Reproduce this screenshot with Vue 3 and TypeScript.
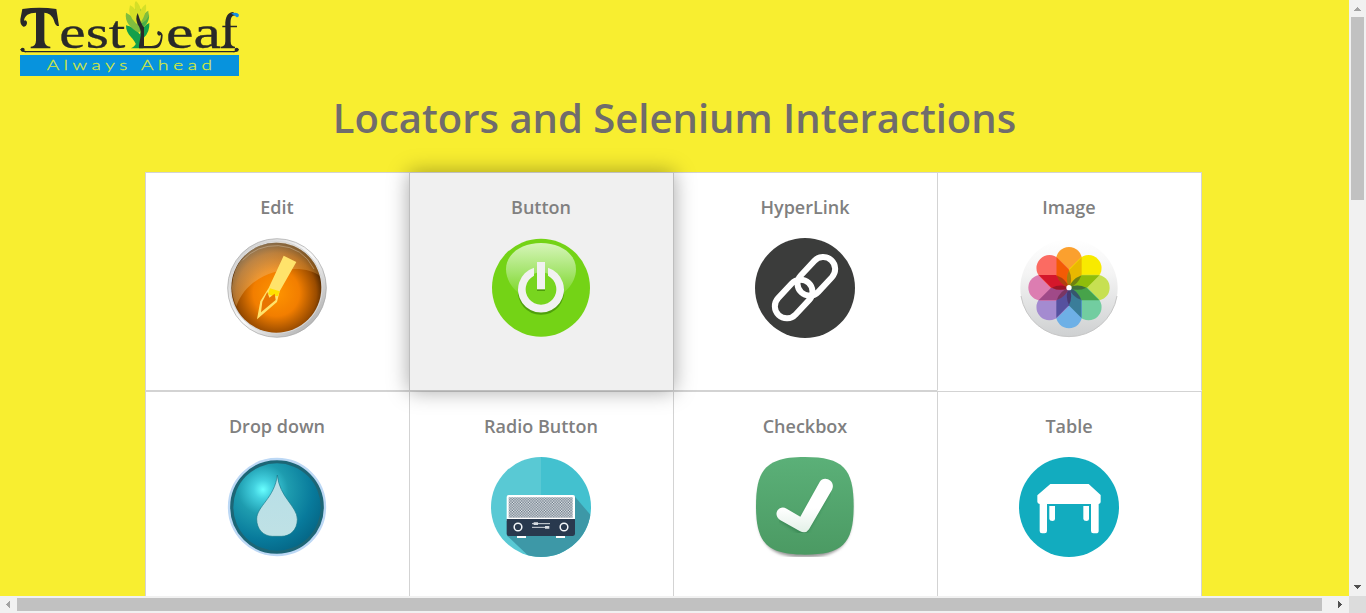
<script setup lang="ts">
interface Topic {
  name: string
  icon: string
  active?: boolean
}

const topics: Topic[] = [
  { name: 'Edit', icon: 'edit' },
  { name: 'Button', icon: 'power', active: true },
  { name: 'HyperLink', icon: 'link' },
  { name: 'Image', icon: 'flower' },
  { name: 'Drop down', icon: 'drop' },
  { name: 'Radio Button', icon: 'radio' },
  { name: 'Checkbox', icon: 'check' },
  { name: 'Table', icon: 'table' },
]

const petals: { color: string; angle: number }[] = [
  { color: '#fba02e', angle: 0 },
  { color: '#f8ea00', angle: 45 },
  { color: '#c7e052', angle: 90 },
  { color: '#72cda0', angle: 135 },
  { color: '#6eb0e6', angle: 180 },
  { color: '#a48bd0', angle: 225 },
  { color: '#dc7db1', angle: 270 },
  { color: '#fb6b62', angle: 315 },
]

const wedges: { color: string; angle: number }[] = [
  { color: '#e9b800', angle: 0 },
  { color: '#8fbd0b', angle: 45 },
  { color: '#47a34a', angle: 90 },
  { color: '#3a7d99', angle: 135 },
  { color: '#56519f', angle: 180 },
  { color: '#a04a88', angle: 225 },
  { color: '#d4172b', angle: 270 },
  { color: '#f35b05', angle: 315 },
]
</script>

<template>
  <div class="window">
    <main class="page">
      <header class="brand">
        <svg class="logo" viewBox="30 0 660 230" role="img" aria-label="TestLeaf">
          <rect x="30" y="165" width="657" height="63" fill="#0793dd" />
          <g fill="#292929" stroke="none">
            <path d="M37 27 Q88 19 139 27 L147 78 Q139 80 134 68 C128 44 114 39 103 38 V121 Q104 140 121 140 V145 H62 V140 Q78 140 78 121 V38 C57 38 43 46 42 63 C44 59 51 61 51 69 Q50 80 40 80 Q30 76 31 58 Z" />
            <g class="letters" stroke="#292929" stroke-width="1">
              <text x="148" y="143" textLength="198" lengthAdjust="spacingAndGlyphs">est</text>
              <text x="468" y="143" textLength="165" lengthAdjust="spacingAndGlyphs">ea</text>
            </g>
            <path d="M637 77 H646 C645 50 654 37 670 36 L676 47 C662 44 661 61 662 77 H681 V82 H662 V124 Q662 140 675 140 V145 H633 V140 Q646 140 646 124 V82 H637Z" />
          </g>
          <path d="M665 40 Q682 35 687 44 Q686 54 679 51 Q673 44 665 42Z" fill="#128fe3" />
          <path d="M382 145 C376 113 347 108 348 76 Q375 81 389 103 Q400 76 418 69 Q420 97 400 115 V145 H363 Q380 138 382 115Z" fill="#13a04b" />
          <path d="M386 98 C362 84 343 66 348 38 Q364 45 373 58 Q374 25 380 10 Q397 28 396 53 Q404 36 415 32 Q421 63 395 89Z" fill="#80bd3e" />
          <path d="M379 71 Q350 44 360 16 Q370 20 376 29 Q371 9 378 3 Q392 15 391 34 Q397 19 408 13 Q412 38 391 69Z" fill="#d5df27" />
          <path d="M385 72 Q416 66 417 38 Q420 65 404 77 Q393 85 393 104Z" fill="#4bae45" />
          <path d="M383 39 Q375 56 383 73 Q398 91 390 119 Q386 137 387 145 H435 C449 145 457 131 458 105 Q455 94 444 93 Q438 102 447 107 L453 105 C452 127 443 138 424 138 H402 V82 Q395 77 383 39Z" fill="#292929" />
          <g fill="none" stroke="#292929" stroke-width="4">
            <path d="M44 155 H674" />
            <path d="M32 147 Q36 155 48 155 M685 147 Q681 155 670 155" />
          </g>
          <g fill="#292929"><circle cx="38" cy="149" r="6" /><circle cx="680" cy="149" r="6" /></g>
          <text class="tagline" x="110" y="209" textLength="510" lengthAdjust="spacingAndGlyphs">Always Ahead</text>
        </svg>
      </header>

      <h1>Locators and Selenium Interactions</h1>

      <ul class="topics">
        <li v-for="topic in topics" :key="topic.name" :class="{ active: topic.active }">
          <h2>{{ topic.name }}</h2>

          <svg v-if="topic.icon === 'edit'" class="icon" viewBox="30 30 300 300">
            <defs>
              <linearGradient id="rim" x1="0" y1="0" x2="1" y2="1">
                <stop offset="0" stop-color="#c4c4c4" /><stop offset=".5" stop-color="#fafafa" /><stop offset="1" stop-color="#9c9c9c" />
              </linearGradient>
              <radialGradient id="amber" cx=".5" cy=".56" r=".57">
                <stop offset="0" stop-color="#ff9400" /><stop offset=".45" stop-color="#f27e00" /><stop offset=".78" stop-color="#9a4c00" /><stop offset="1" stop-color="#201000" />
              </radialGradient>
              <linearGradient id="sheen" x1="0" y1="0" x2=".8" y2=".8">
                <stop offset="0" stop-color="#d4c5ad" stop-opacity=".6" /><stop offset="1" stop-color="#ffb347" stop-opacity=".25" />
              </linearGradient>
            </defs>
            <circle cx="180" cy="180" r="148" fill="url(#rim)" stroke="#a5a5a5" stroke-width="2" />
            <circle cx="178" cy="178" r="138" fill="#e2e2e2" stroke="#d6d6d6" stroke-width="3" />
            <circle cx="178" cy="179" r="135" fill="url(#amber)" />
            <path d="M58 235 A134 134 0 1 1 309 145 C265 103 98 116 58 235Z" fill="url(#sheen)" />
            <path d="M77 97 Q119 51 184 53 Q257 57 291 123" fill="none" stroke="#ded0b9" stroke-opacity=".4" stroke-width="3" />
            <path d="M200 83 L238 102 L188 190 L180 222 L120 274 L130 220 L155 180Z" fill="#ffe36b" />
            <path d="M159 181 L188 190 L183 204 L169 205 L153 198Z" fill="#ffe100" />
            <path d="M151 192 L157 209 L173 197 L176 216 L132 253 L136 221Z" fill="#e87500" />
          </svg>

          <svg v-else-if="topic.icon === 'power'" class="icon" viewBox="30 30 300 300">
            <defs>
              <linearGradient id="gloss" x1="0" y1="0" x2="0" y2="1">
                <stop offset="0" stop-color="#d6f5b9" /><stop offset=".5" stop-color="#a6e56f" /><stop offset="1" stop-color="#75d419" />
              </linearGradient>
            </defs>
            <circle cx="180" cy="179" r="147" fill="#74d316" />
            <path d="M75 124 C75 78 120 45 180 45 S285 78 285 124 C285 165 249 215 180 215 S75 165 75 124Z" fill="url(#gloss)" />
            <g transform="translate(0 11)" fill="none" stroke="#4f9f0b" stroke-width="22"><path d="M148 132 A58 58 0 1 0 212 132" /></g>
            <circle cx="180" cy="182" r="49" fill="#78d51f" />
            <path d="M168 110 h24 v79 h-24z" fill="#4f9f0b" />
            <path d="M159 119 V143 A46 46 0 1 0 201 143 V119 A69 69 0 1 1 159 119Z" fill="#f1f1f1" />
            <path d="M168 102 h24 v82 h-24z" fill="#f1f1f1" />
          </svg>

          <svg v-else-if="topic.icon === 'link'" class="icon" viewBox="30 30 300 300">
            <circle cx="180" cy="180" r="150" fill="#3b3c3b" />
            <g fill="none" stroke="#fff" stroke-width="18">
              <rect x="-66" y="-36" width="132" height="72" rx="36" transform="translate(214 145) rotate(-47)" />
              <rect x="-66" y="-36" width="132" height="72" rx="36" transform="translate(146 213) rotate(-47)" />
            </g>
          </svg>

          <svg v-else-if="topic.icon === 'flower'" class="icon" viewBox="30 30 300 300">
            <defs>
              <linearGradient id="dish" x1="0" y1="0" x2="0" y2="1">
                <stop offset="0" stop-color="#fff" /><stop offset=".35" stop-color="#f4f4f4" /><stop offset="1" stop-color="#ced0d1" />
              </linearGradient>
            </defs>
            <circle cx="180" cy="180" r="146" fill="url(#dish)" />
            <path d="M36 204 A146 146 0 0 0 324 204" fill="none" stroke="#c7c7c7" stroke-width="3" />
            <g v-for="petal in petals" :key="petal.angle" :transform="`rotate(${petal.angle} 180 179)`">
              <path d="M180 179 L141 141 V96 A39 39 0 0 1 219 96 V141Z" :fill="petal.color" />
            </g>
            <g v-for="wedge in wedges" :key="wedge.angle" :transform="`rotate(${wedge.angle} 180 179)`">
              <path d="M180 179 V126 L218 88 V141Z" :fill="wedge.color" />
            </g>
            <g v-for="wedge in wedges" :key="`core-${wedge.angle}`" :transform="`rotate(${wedge.angle} 180 179)`">
              <path d="M180 179 Q167 155 180 127 Q193 155 180 179Z" :fill="wedge.color" />
              <path d="M180 179 Q167 155 180 127 Q193 155 180 179Z" fill="#301020" fill-opacity=".35" />
            </g>
            <circle cx="180" cy="179" r="8" fill="#fff" />
          </svg>

          <svg v-else-if="topic.icon === 'drop'" class="icon" viewBox="30 30 300 300">
            <defs>
              <radialGradient id="water" cx=".34" cy=".3" r=".76">
                <stop offset="0" stop-color="#69ffff" /><stop offset=".14" stop-color="#43d1df" /><stop offset=".38" stop-color="#1e9caf" /><stop offset=".75" stop-color="#087a9b" /><stop offset="1" stop-color="#056787" />
              </radialGradient>
              <linearGradient id="bead" x1="0" y1="0" x2="0" y2="1">
                <stop offset="0" stop-color="#b7dfe7" /><stop offset="1" stop-color="#bfe1e5" />
              </linearGradient>
            </defs>
            <circle cx="180" cy="180" r="144" fill="#1d6676" stroke="#bcd8f5" stroke-width="7" />
            <circle cx="180" cy="180" r="131" fill="url(#water)" />
            <path d="M181 84 C187 151 241 178 241 217 C241 249 219 268 193 268 H166 C139 267 119 247 119 216 C119 178 173 153 181 84Z" fill="url(#bead)" stroke="#17788b" stroke-width="2" />
          </svg>

          <svg v-else-if="topic.icon === 'radio'" class="icon" viewBox="30 30 300 300">
            <defs>
              <clipPath id="disc"><circle cx="180" cy="180" r="150" /></clipPath>
              <pattern id="mesh" width="8" height="8" patternUnits="userSpaceOnUse">
                <rect width="8" height="8" fill="#e7ebee" /><path d="M0 0h4v4h-4zM4 4h4v4h-4z" fill="#657482" />
              </pattern>
            </defs>
            <g clip-path="url(#disc)">
              <path d="M30 30h150v300h-150z" fill="#59c9d4" /><path d="M180 30h150v300h-150z" fill="#43c1cf" />
              <path d="M280 147 L350 229 V350 H167 L78 266Z" fill="#3d98a7" />
            </g>
            <rect x="77" y="144" width="205" height="82" rx="6" fill="#fff" />
            <path d="M83 151h192v61h-192z" fill="url(#mesh)" />
            <path d="M77 216 H282 V261 Q281 267 275 267 H83 Q77 267 77 261Z" fill="#29394e" />
            <g fill="none" stroke="#f4f7fa" stroke-width="4.5"><circle cx="111" cy="240" r="11.5" /><circle cx="249" cy="240" r="11.5" /></g>
            <path d="M153 230h54M153 241h50" stroke="#d7dce1" stroke-width="3" />
            <path d="M158 226h13v8h-13zM192 237h13v8h-13z" fill="#d7dce1" />
            <path d="M108 267h27v6h-27zM225 267h27v6h-27z" fill="#fff" />
          </svg>

          <svg v-else-if="topic.icon === 'check'" class="icon" viewBox="30 30 300 300">
            <defs>
              <linearGradient id="leafy" x1="0" y1="0" x2="0" y2="1"><stop offset="0" stop-color="#5bb078" /><stop offset="1" stop-color="#4b9a63" /></linearGradient>
              <linearGradient id="tick" x1="0" y1="0" x2="0" y2="1"><stop offset=".55" stop-color="#fff" /><stop offset="1" stop-color="#e3f0e7" /></linearGradient>
              <filter id="soft"><feGaussianBlur stdDeviation="4" /></filter>
            </defs>
            <path d="M180 38 C286 38 323 75 323 182 S286 331 180 331 S37 289 37 182 S74 38 180 38Z" fill="#999" filter="url(#soft)" />
            <path d="M180 30 C294 30 326 65 326 177 S293 323 180 323 S33 289 33 177 S66 30 180 30Z" fill="url(#leafy)" />
            <path d="M117 208 L173 243 L243 120" fill="none" stroke="#236d3f" stroke-width="40" stroke-linecap="round" stroke-linejoin="round" filter="url(#soft)" opacity=".45" />
            <path d="M125 185 L166 209 L224 105 C236 84 274 101 261 128 L192 247 Q182 262 164 252 L105 219 C81 201 102 172 125 185Z" fill="url(#tick)" />
          </svg>

          <svg v-else class="icon" viewBox="30 30 300 300">
            <circle cx="180" cy="180" r="150" fill="#12acbf" />
            <path d="M124 111 H239 L275 144 V165 Q275 170 269 171 V252 Q269 259 261 259 H253 Q246 259 246 252 V171 H114 V252 Q114 259 107 259 H99 Q92 259 92 252 V171 Q85 169 85 164 V145Z" fill="#fff" />
            <path d="M121 177h17v39q0 6-8 6t-9-6zM223 177h17v39q0 6-8 6t-9-6z" fill="#fff" />
          </svg>
        </li>
      </ul>
    </main>

    <div class="bar vertical">
      <svg viewBox="0 0 17 17"><path d="M5 11h7v-1h-1v-1h-1v-1h-1v-1h-1v1h-1v1h-1v1h-1z" fill="#a3a3a3" /></svg>
      <div class="thumb"></div>
      <svg viewBox="0 0 17 17"><path d="M5 6h7v1h-1v1h-1v1h-1v1h-1v-1h-1v-1h-1v-1h-1z" fill="#505050" /></svg>
    </div>
    <div class="bar horizontal">
      <svg viewBox="0 0 17 17"><path d="M10 5v7h-1v-1h-1v-1h-1v-1h-1v-1h1v-1h1v-1h1v-1z" fill="#a3a3a3" /></svg>
      <div class="thumb"></div>
      <svg viewBox="0 0 17 17"><path d="M6 5v7h1v-1h1v-1h1v-1h1v-1h-1v-1h-1v-1h-1v-1z" fill="#505050" /></svg>
    </div>
    <div class="corner"></div>
  </div>
</template>

<style>
body {
  margin: 0;
  overflow: hidden;
}
</style>

<style scoped>
.window {
  display: grid;
  grid-template: 596px 17px / 1349px 17px;
  width: 1366px;
  height: 613px;
  overflow: hidden;
  font-family: "Open Sans", sans-serif;
}
.page {
  overflow: hidden;
  background: #f8ee30;
}
.brand {
  height: 77px;
  padding-left: 20px;
}
.logo {
  display: block;
  width: 220px;
  height: 76.67px;
}
.letters {
  font: 138px "Liberation Serif", serif;
}
.tagline {
  font: 300 41px Lato, sans-serif;
  letter-spacing: 10px;
  fill: #d4e83c;
  stroke: #d4e83c;
  stroke-width: 0.8;
}
h1 {
  margin: 13px 0 27px;
  height: 55px;
  color: #706c6c;
  font-size: 40px;
  font-weight: 600;
  line-height: 55px;
  text-align: center;
  white-space: nowrap;
}
.topics {
  display: grid;
  grid-template-columns: repeat(4, 264px);
  grid-auto-rows: 219px;
  width: 1056px;
  margin: 0 0 0 145px;
  padding: 0;
  list-style: none;
}
li {
  display: flex;
  flex-direction: column;
  align-items: center;
  box-sizing: border-box;
  width: 265px;
  height: 219px;
  padding-right: 1px;
  border: 1px solid #d3d3d3;
  background: #fff;
}
li:nth-child(4) {
  border-bottom-color: #fff;
}
li.active {
  z-index: 1;
  background: #f0f0f0;
  border-color: #bebebe;
  box-shadow: 0 0 20px rgba(0, 0, 0, 0.35);
}
h2 {
  height: 25px;
  margin: 22px 0 18px;
  color: #808080;
  font-size: 18px;
  font-weight: 600;
  line-height: 25px;
}
.icon {
  display: block;
  width: 100px;
  height: 100px;
}
.bar {
  display: flex;
  background: #f1f1f1;
}
.bar svg {
  flex: none;
  width: 17px;
  height: 17px;
  shape-rendering: crispEdges;
}
.thumb {
  background: #c1c1c1;
}
.vertical {
  flex-direction: column;
}
.vertical .thumb {
  height: 183px;
  margin: 0 2px auto;
}
.horizontal .thumb {
  width: 1305px;
  margin: 2px auto 2px 0;
}
.corner {
  background: #dcdcdc;
}
</style>
